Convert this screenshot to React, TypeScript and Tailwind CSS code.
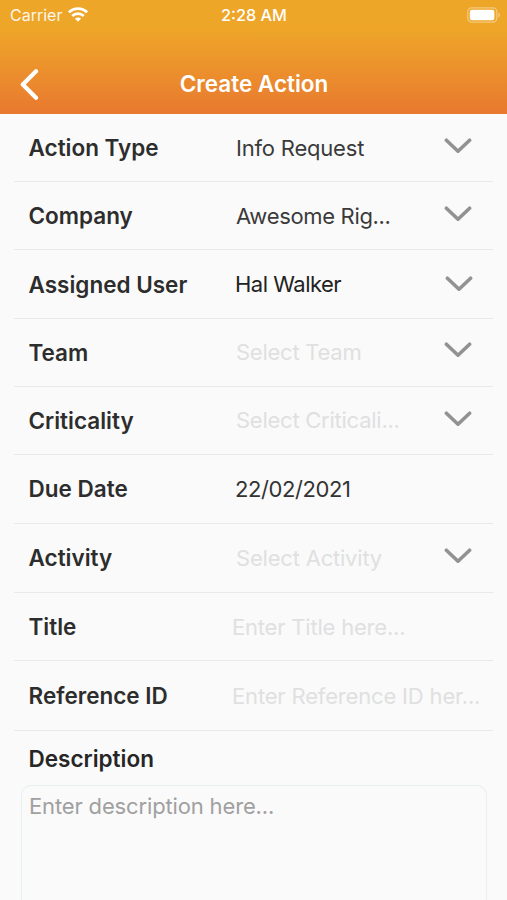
// =============================================================
//  Create Action form screen

type Field = {
    label: string;
    value: string;
    row: string;
    labelClass: string;
    valueClass: string;
    chevron?: string;
};

// Row heights differ by a pixel here and there, so each row carries its own
const fields: Field[] = [
    { label: 'Action Type', value: 'Info Request', row: 'h-[68px]', labelClass: 'pt-px', valueClass: 'pt-px pl-[4px] tracking-[-0.2px] text-[#3a3a3a]', chevron: 'mr-[21.5px] mb-[3px]' },
    { label: 'Company', value: 'Awesome Rig...', row: 'h-[68px]', labelClass: 'pt-px', valueClass: 'pt-px pl-[4px] tracking-[-0.33px] text-[#3a3a3a]', chevron: 'mr-[21.5px] mb-[3px]' },
    { label: 'Assigned User', value: 'Hal Walker', row: 'h-[69px]', labelClass: 'pt-px', valueClass: 'pt-px pl-[3px] tracking-[-0.5px] text-[#222222]', chevron: 'mr-[20px]' },
    { label: 'Team', value: 'Select Team', row: 'h-[68px]', labelClass: '', valueClass: 'pl-[4px] tracking-[-0.25px] text-[#e0e0e0]', chevron: 'mr-[21.5px] mb-[5px]' },
    { label: 'Criticality', value: 'Select Criticali...', row: 'h-[68px]', labelClass: '', valueClass: 'pl-[4px] tracking-[-0.25px] text-[#e0e0e0]', chevron: 'mr-[21.5px] mb-[4px]' },
    { label: 'Due Date', value: '22/02/2021', row: 'h-[69px]', labelClass: '', valueClass: 'pl-[3px] tracking-[-0.4px] text-[#333333]' },
    { label: 'Activity', value: 'Select Activity', row: 'h-[69px]', labelClass: '', valueClass: 'pl-[4px] tracking-[-0.2px] text-[#e0e0e0]', chevron: 'mr-[21.5px] mb-[5px]' },
    { label: 'Title', value: 'Enter Title here...', row: 'h-[68px]', labelClass: 'pt-px', valueClass: 'pt-px pl-0 tracking-[-0.2px] text-[#e0e0e0]' },
    { label: 'Reference ID', value: 'Enter Reference ID her...', row: 'h-[70px]', labelClass: 'pt-px', valueClass: 'pt-px pl-0 tracking-[-0.17px] text-[#e0e0e0]' },
];

// ── Icons ────────────────────────────────────────────────────
function ChevronDown({ className = '' }: { className?: string }) {
    return (
        <svg className={`w-7 h-4 shrink-0 ${className}`} viewBox="0 0 28 16" fill="none">
            <path d="M2.4 2.2 L14 13.2 L25.6 2.2" stroke="#929292" strokeWidth="3.6" strokeLinecap="round" strokeLinejoin="round" />
        </svg>
    );
}

function WifiIcon() {
    return (
        <svg className="w-5 h-[15px]" viewBox="0 0 20 15" fill="none" stroke="#fff" strokeWidth="2.8">
            <path d="M0.9 5.3 C6 0.3 14 0.3 19.1 5.3" />
            <path d="M4.2 9 C7.5 5.9 12.5 5.9 15.8 9" />
            <path d="M10 14.7 L6.9 11.6 C8.7 10.1 11.3 10.1 13.1 11.6 Z" fill="#fff" stroke="none" />
        </svg>
    );
}

function BatteryIcon() {
    return (
        <svg className="w-[34px] h-4" viewBox="0 0 34 16" fill="none">
            <rect x="0.8" y="0.8" width="29" height="14.4" rx="4" stroke="#fff" strokeOpacity="0.4" strokeWidth="1.2" />
            <rect x="2.8" y="2.8" width="24.6" height="10.4" rx="2.2" fill="#fff" />
            <path d="M31.4 5.6 C33.4 6.4 33.4 9.6 31.4 10.4 Z" fill="#fff" fillOpacity="0.45" />
        </svg>
    );
}

// ── Status bar + title ───────────────────────────────────────
function Header() {
    return (
        <header className="h-[114px] bg-linear-to-b from-[#eea629] from-25% to-[#e8782f] text-white">
            <div className="h-[29px] grid grid-cols-3 items-center pl-[10px] pr-[6px]">
                <div className="flex items-center gap-[6px]">
                    <span className="pt-px text-[16px] opacity-90">Carrier</span>
                    <WifiIcon />
                </div>
                <span className="pt-px pr-[3px] text-center text-[16.3px] font-medium whitespace-nowrap">2:28 AM</span>
                <div className="flex justify-end">
                    <BatteryIcon />
                </div>
            </div>
            <div className="h-[85px] grid grid-cols-[60px_1fr_60px] items-center pt-6">
                <svg className="w-5 h-8 ml-5" viewBox="0 0 20 32" fill="none">
                    <path d="M16 3.2 L2.8 16.5 L16 29.8" stroke="#fff" strokeWidth="4.2" strokeLinecap="round" strokeLinejoin="round" />
                </svg>
                <h1 className="pl-px text-center text-[22.5px] font-semibold whitespace-nowrap">Create Action</h1>
            </div>
        </header>
    );
}

// ── One label / value row ────────────────────────────────────
function FieldRow({ field }: { field: Field }) {
    return (
        <div className={`flex items-center border-b border-[#e8eaea] ${field.row}`}>
            <span className={`w-[218px] shrink-0 pl-[14.5px] text-[22.5px] font-semibold text-[#2d2d2d] whitespace-nowrap ${field.labelClass}`}>
                {field.label}
            </span>
            <span className={`flex-1 text-[22px] whitespace-nowrap ${field.valueClass}`}>{field.value}</span>
            {field.chevron && <ChevronDown className={field.chevron} />}
        </div>
    );
}

export default function App() {
    return (
        <div className="h-[900px] overflow-hidden flex flex-col bg-[#fafafa] font-['Inter',sans-serif]">
            <Header />
            <main className="flex-1 min-h-0 flex flex-col">
                <div className="mx-[14px]">
                    {fields.map((field) => (
                        <FieldRow key={field.label} field={field} />
                    ))}
                </div>

                {/* Description */}
                <h2 className="h-[54px] pl-[28.5px] text-[22.5px] leading-[55px] font-semibold text-[#262626]">Description</h2>
                <div className="flex-1 ml-[21px] mr-5 pl-[7px] pt-1 border-[1.5px] border-b-0 border-[#e6f0ef] rounded-t-[10px]">
                    <span className="text-[22px] leading-8 tracking-[-0.15px] text-[#a0a0a0] whitespace-nowrap">Enter description here...</span>
                </div>
            </main>
        </div>
    );
}
